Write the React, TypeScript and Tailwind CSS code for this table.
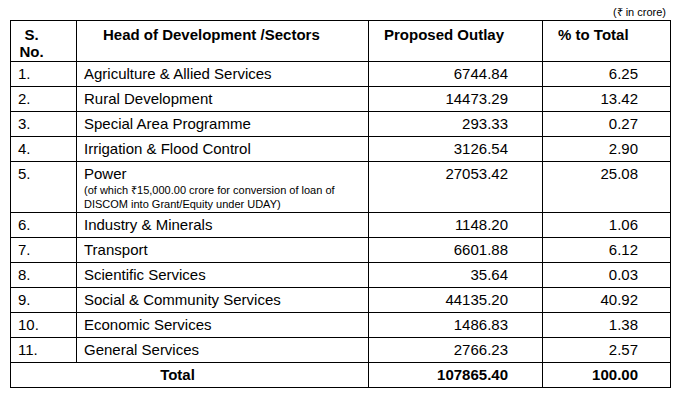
const rows = [
  { no: "1.", head: "Agriculture & Allied Services", outlay: "6744.84", pct: "6.25" },
  { no: "2.", head: "Rural Development", outlay: "14473.29", pct: "13.42" },
  { no: "3.", head: "Special Area Programme", outlay: "293.33", pct: "0.27" },
  { no: "4.", head: "Irrigation & Flood Control", outlay: "3126.54", pct: "2.90" },
  {
    no: "5.",
    head: "Power",
    note: "(of which ₹15,000.00 crore for conversion of loan of DISCOM into Grant/Equity under UDAY)",
    outlay: "27053.42",
    pct: "25.08",
  },
  { no: "6.", head: "Industry & Minerals", outlay: "1148.20", pct: "1.06" },
  { no: "7.", head: "Transport", outlay: "6601.88", pct: "6.12" },
  { no: "8.", head: "Scientific Services", outlay: "35.64", pct: "0.03" },
  { no: "9.", head: "Social & Community Services", outlay: "44135.20", pct: "40.92" },
  { no: "10.", head: "Economic Services", outlay: "1486.83", pct: "1.38" },
  { no: "11.", head: "General Services", outlay: "2766.23", pct: "2.57" },
];

const cell = "border border-black align-top";

export default function App() {
  return (
    <div className="w-[679px] h-[401px] bg-white text-black font-['Liberation_Sans',Arial,sans-serif]">
      <div className="pt-[6px] pr-[13px] text-right text-[11px] leading-[13px]">(₹ in crore)</div>
      <table className="ml-[10px] mt-[1px] w-[660px] border-collapse table-fixed text-[15px] leading-[17px]">
        <colgroup>
          <col className="w-[66px]" />
          <col className="w-[292px]" />
          <col className="w-[174px]" />
          <col className="w-[128px]" />
        </colgroup>
        <thead>
          <tr className="h-[41px] font-bold">
            <th className={`${cell} pt-[5px] pl-[8px] text-left font-bold`}>
              <div className="w-[25px] text-center">S.</div>
              <div className="w-[25px] text-center">No.</div>
            </th>
            <th className={`${cell} pt-[5px] pl-[26px] text-left font-bold`}>Head of Development /Sectors</th>
            <th className={`${cell} pt-[5px] pl-[15px] text-left font-bold`}>Proposed Outlay</th>
            <th className={`${cell} pt-[5px] pl-[15px] text-left font-bold`}>% to Total</th>
          </tr>
        </thead>
        <tbody>
          {rows.map((r) => (
            <tr key={r.no} className="h-[25px]">
              <td className={`${cell} pt-[3px] pl-[7px]`}>{r.no}</td>
              <td className={`${cell} pt-[3px] pl-[7px]`}>
                {r.head}
                {r.note && (
                  <div className="text-[11px] leading-[14px] pr-[8px] pt-[1px] pb-[1px]">{r.note}</div>
                )}
              </td>
              <td className={`${cell} pt-[3px] pr-[34px] text-right`}>{r.outlay}</td>
              <td className={`${cell} pt-[3px] pr-[32px] text-right`}>{r.pct}</td>
            </tr>
          ))}
          <tr className="h-[25px] font-bold">
            <td colSpan={2} className={`${cell} pt-[3px] pr-[24px] text-center`}>Total</td>
            <td className={`${cell} pt-[3px] pr-[34px] text-right`}>107865.40</td>
            <td className={`${cell} pt-[3px] pr-[32px] text-right`}>100.00</td>
          </tr>
        </tbody>
      </table>
    </div>
  );
}
